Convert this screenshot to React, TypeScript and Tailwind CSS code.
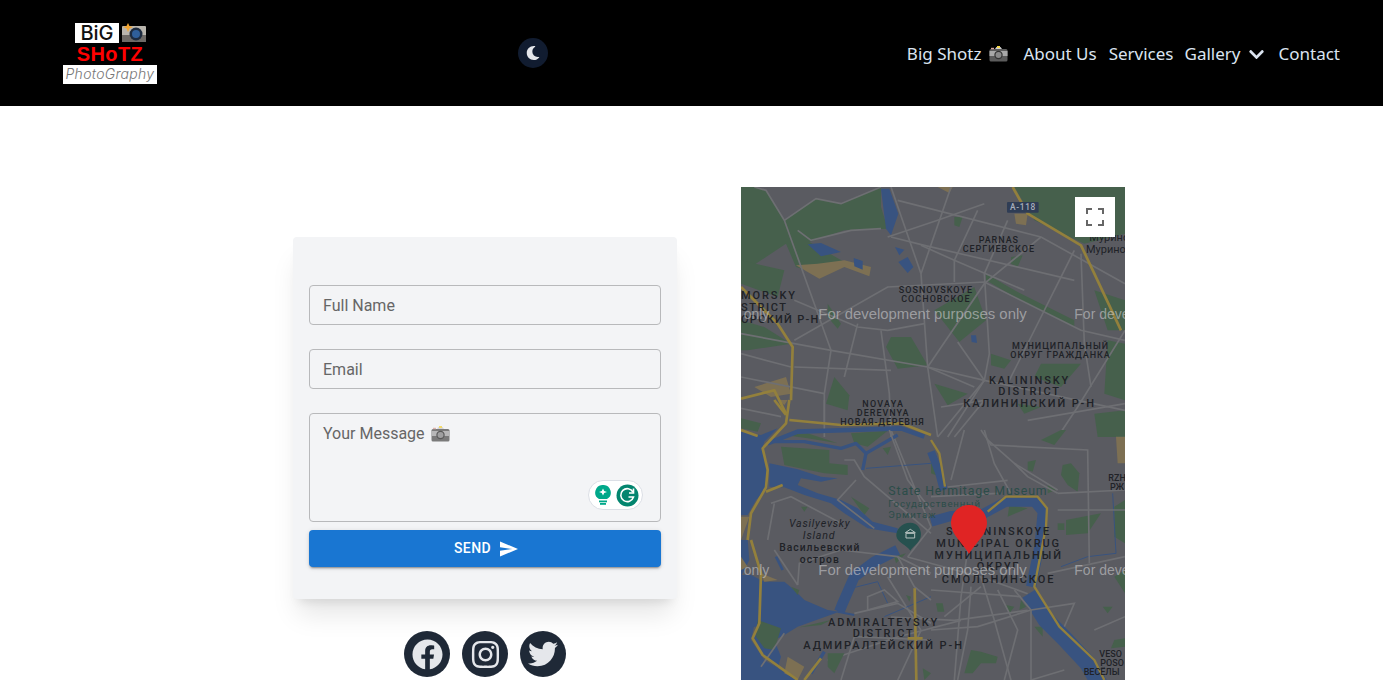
import { FaFacebook, FaInstagram, FaTwitter, FaMoon, FaChevronDown } from "react-icons/fa";

function Camera({ w = 19, className = "" }: { w?: number; className?: string }) {
  return (
    <svg width={w} height={Math.round((w * 16) / 19)} viewBox="0 0 19 16" className={"shrink-0 " + className}>
      <rect x="0.5" y="3" width="18" height="12.5" rx="1.5" fill="#5c5c5c" />
      <rect x="0.5" y="5" width="18" height="5" fill="#a9a9a9" />
      <path d="M6 3 L7.5 1 H11.5 L13 3Z" fill="#cfcfcf" />
      <rect x="8" y="0" width="3" height="2" fill="#f5d64b" />
      <rect x="2" y="1.8" width="3" height="1.4" fill="#d9a59d" />
      <circle cx="9.5" cy="9" r="4.2" fill="#333" />
      <circle cx="9.5" cy="9" r="3" fill="#8b8b8b" />
    </svg>
  );
}

function Logo() {
  return (
    <div className="flex w-[94px] flex-col items-center">
      <div className="ml-[1px] flex h-[20px] items-stretch gap-[3px]">
        <div className="flex w-[44px] items-center justify-center bg-white font-['Inter',sans-serif] text-[20px] font-medium leading-none text-[#111]">BiG</div>
        <svg width="24" height="20" viewBox="0 0 24 20">
          <rect x="0" y="3" width="24" height="16" rx="1" fill="#b9b5ad" />
          <rect x="0" y="12" width="24" height="7" fill="#6e6a66" />
          <circle cx="14" cy="11" r="6.5" fill="#1d2b3f" />
          <circle cx="14" cy="11" r="4" fill="#2f5f9a" />
          <path d="M6 0 L7.5 3 L11 4 L7.5 5.5 L6 9 L4.5 5.5 L1 4 L4.5 3Z" fill="#f2a531" />
        </svg>
      </div>
      <div className="mt-[3px] h-[17px] font-['Liberation_Sans',sans-serif] text-[20px] font-bold leading-[17px] tracking-[0.4px] text-[#ff0000]">SHoTZ</div>
      <div className="mt-[2px] flex h-[19px] w-[94px] items-center justify-center bg-white font-['Inter',sans-serif] text-[14px] font-light italic leading-none tracking-[0.3px] text-[#777]">PhotoGraphy</div>
    </div>
  );
}

function NavItem({ children, className = "" }: { children: React.ReactNode; className?: string }) {
  return <a className={"block cursor-pointer " + className}>{children}</a>;
}

function Header() {
  return (
    <header className="flex h-[106px] items-center bg-black pl-[63px] pr-[43px]">
      <Logo />
      <button className="ml-[361px] flex h-[30px] w-[30px] items-center justify-center rounded-full bg-[#111c30] text-[#e5e7eb]">
        <FaMoon size={14} />
      </button>
      <nav className="ml-auto mt-[2px] flex items-center font-['Noto_Sans',sans-serif] text-[17px] text-[#dbe4f0]">
        <NavItem className="flex items-center gap-[8px]">Big Shotz <Camera /></NavItem>
        <NavItem className="ml-[15px]">About Us</NavItem>
        <NavItem className="ml-[12px]">Services</NavItem>
        <NavItem className="ml-[11px] flex items-center gap-[8px]">Gallery <FaChevronDown size={17} /></NavItem>
        <NavItem className="ml-[13px]">Contact</NavItem>
      </nav>
    </header>
  );
}

type L = [string, number, number, number, number?];

const upperLabels: L[] = [
  ["PARNAS", 772, 167, 118, 27],
  ["СЕРГИЕВСКОЕ", 772, 195, 214, 27],
  ["SOSNOVSKOYE", 583, 318, 220, 27],
  ["СОСНОВСКОЕ", 583, 345, 205, 27],
  ["МУНИЦИПАЛЬНЫЙ", 957, 485, 288, 27],
  ["ОКРУГ ГРАЖДАНКА", 957, 512, 298, 27],
  ["KALININSKY", 863, 590, 238, 33],
  ["DISTRICT", 863, 625, 182, 33],
  ["КАЛИНИНСКИЙ Р-Н", 863, 661, 392, 33],
  ["NOVAYA", 425, 660, 122, 27],
  ["DEREVNYA", 425, 687, 155, 27],
  ["НОВАЯ-ДЕРЕВНЯ", 423, 714, 250, 27],
];
const lowerLabels: L[] = [
  ["Васильевский", 235, 362, 240, 31],
  ["остров", 235, 398, 117, 31],
  ["SMOLNINSKOYE", 770, 315, 310, 33],
  ["MUNICIPAL OKRUG", 770, 352, 368, 33],
  ["МУНИЦИПАЛЬНЫЙ", 770, 388, 380, 33],
  ["ОКРУГ", 770, 420, 125, 33],
  ["СМОЛЬНИНСКОЕ", 770, 460, 335, 33],
  ["ADMIRALTEYSKY", 425, 587, 328, 33],
  ["DISTRICT", 425, 622, 180, 33],
  ["АДМИРАЛТЕЙСКИЙ Р-Н", 425, 658, 476, 33],
];

function Labels({ items }: { items: L[] }) {
  return (
    <g fill="#202227" fontFamily="Roboto, sans-serif" fontWeight="500" textAnchor="middle">
      {items.map(([t, x, y, w, s], i) => (
        <text key={i} x={x} y={y} fontSize={s ?? 27} textLength={w} lengthAdjust="spacing">{t}</text>
      ))}
    </g>
  );
}

const upperRoads = [
  "M40 0 L75 10 L130 100 L270 490 L250 620 L250 750",
  "M130 100 L225 35 L300 50 L420 0",
  "M450 0 L540 260 L560 540 L590 750",
  "M630 0 L540 260",
  "M470 40 L900 150 L1152 290",
  "M0 440 L270 490 L560 540 L730 580 L1152 670",
  "M160 460 L440 300 L730 285 L1020 430 L1152 460",
  "M440 150 L590 100 L730 50",
  "M450 150 L550 175 L1000 280",
  "M730 260 L745 500 L730 580 L590 750",
  "M900 150 L730 290 L560 540",
  "M1020 200 L1030 470 L1050 600",
  "M1000 190 L800 590",
  "M420 430 L445 620 L450 750",
  "M350 410 L310 570",
  "M0 570 L250 620",
  "M730 580 L620 750",
  "M1152 430 L1010 660 L950 750",
  "M650 465 L730 580",
  "M160 340 L350 420 L440 430 L550 410",
  "M710 70 L640 220 L640 285",
  "M0 500 L150 540",
  "M800 100 L730 260",
  "M170 130 L210 160 L330 130 L420 125",
  "M540 175 L640 220 L850 310",
  "M160 540 L450 550",
  "M560 540 L700 600",
  "M860 700 L1152 650",
  "M600 660 L730 640 L640 750",
];
const midRoads = [
  "M450 729 L520 900 L570 1020",
  "M730 729 L760 830 L810 920",
  "M680 1090 L660 1230 L640 1480",
  "M720 1170 L760 1300 L810 1480",
  "M450 1290 L640 1300 L860 1270",
  "M500 1110 L720 1170 L860 1220",
  "M570 1020 L500 1110",
  "M620 900 L800 880",
  "M440 1170 L540 1330 L470 1480",
  "M260 1420 L470 1350 L660 1300",
];
const cropARoads = [
  "M310 180 H340 L370 230 L570 400",
  "M445 90 L500 240 L570 330",
  "M345 240 L290 300 L400 385",
  "M90 310 L150 290 L300 370",
  "M100 310 L80 420",
  "M0 25 L120 50",
  "M250 0 V70",
];
const cropBRoads = [
  "M170 135 L175 70 L300 30 L470 50 L570 100",
  "M380 170 L430 150 L470 185 L380 210 Z",
  "M340 220 L470 190 L570 250",
  "M470 50 L520 140 L570 180",
  "M60 380 L130 280",
  "M300 420 L340 290 L570 300",
  "M100 30 L170 135",
];
const cropCRoads = [
  "M150 0 L180 45 L470 60 L475 400",
  "M380 190 L582 180",
  "M380 240 L582 240",
  "M250 100 L380 180",
  "M170 30 L250 100 L290 140 L380 190",
  "M0 600 L140 590 L300 540 L430 520 L400 590",
  "M350 430 L582 380",
  "M120 470 L110 600 L80 750",
  "M250 480 L300 540 L300 750",
  "M490 600 L582 560",
  "M0 480 L270 500",
  "M300 750 L400 720",
  "M0 200 L200 190",
  "M100 0 L60 150",
  "M150 470 L40 560",
  "M200 480 L260 600 L220 750",
];

function MapPanel() {
  return (
    <div className="relative h-[500px] w-[384px] shrink-0 overflow-hidden bg-[#5a5b61]">
      <svg viewBox="0 0 384 500" width="384" height="500" className="block">
        <g transform="scale(0.33333)">
          <g fill="#46604c">
            <path d="M0 0 L45 0 L75 10 L130 100 L225 35 L300 50 L420 0 L420 60 L440 125 L310 130 L205 165 L310 225 L230 260 L165 240 L135 170 L0 260Z" />
            <path d="M820 0 L1152 0 L1152 140 L1030 170 L880 100Z" />
            <path d="M0 290 L0 220 L130 250 L110 330Z" />
            <path d="M580 370 L700 300 L735 400 L655 465Z" />
            <path d="M450 450 L510 450 L560 535 L470 545 L435 480Z" />
            <path d="M735 260 L830 315 L1000 400 L1000 420 L830 335 L735 280Z" />
            <path d="M0 400 L70 420 L150 470 L20 490 L0 490Z" />
            <path d="M580 590 L680 620 L620 655Z" />
            <path d="M280 570 L325 625 L320 670 L255 650Z" />
            <path d="M900 530 L1020 530 L960 600 L880 570Z" />
            <path d="M1060 310 L1152 340 L1152 430 L1100 430Z" />
            <path d="M1100 460 L1152 470 L1152 640 L1090 620Z" />
            <path d="M1060 680 L1152 670 L1152 750 L1070 750Z" />
            <path d="M750 500 L810 520 L790 545 L750 535Z" />
            <path d="M640 90 L665 90 L655 120 L640 115Z" />
            <path d="M810 210 L845 205 L830 240 L810 230Z" />
            <path d="M260 350 L300 410 L290 425 L260 390Z" />
            <path d="M830 650 L900 660 L850 680Z" />
          </g>
          <g fill="#7d7053">
            <path d="M165 235 L230 230 L310 220 L390 240 L385 268 L310 240 L235 275Z" />
            <path d="M590 0 L635 0 L625 18Z" />
            <path d="M820 80 L860 80 L855 115 L825 110Z" />
            <path d="M40 600 L135 570 L150 620 L90 630Z" />
          </g>
          <g fill="#385380">
            <path d="M420 5 L445 5 L472 80 L450 145 L435 125Z" />
            <path d="M200 172 L240 168 L300 195 L240 208Z" />
            <path d="M338 213 L365 222 L365 248 L340 238Z" />
            <path d="M462 180 L490 188 L475 205Z" />
            <path d="M472 225 L500 210 L517 240 L500 258Z" />
            <path d="M690 445 L705 445 L708 468 L692 465Z" />
          </g>
          <g fill="none" stroke="#6e6f73" strokeWidth="5">
            {upperRoads.map((d) => <path key={d} d={d} />)}
            {midRoads.map((d) => <path key={d} d={d} />)}
          </g>

          <g transform="translate(0 639)">
            <g fill="#46604c">
              <path d="M120 140 L265 150 L265 190 L320 195 L320 225 L250 220 L130 195Z" />
              <path d="M330 100 L440 92 L380 140 L340 130Z" />
              <path d="M130 105 L200 100 L290 130 L200 115Z" />
              <path d="M0 55 L60 70 L50 95 L0 85Z" />
              <path d="M425 145 L450 140 L440 165Z" />
              <path d="M180 320 L200 320 L190 335Z" />
              <path d="M330 290 L385 325 L370 345Z" />
            </g>
            <path d="M110 0 L140 0 L130 15Z" fill="#7d7053" />
            <path d="M0 350 L25 350 L0 420Z" fill="#7d7053" />
            <g fill="#385380">
              <path d="M0 95 L60 105 L110 85 L70 125 L62 150 L80 210 L80 262 L45 300 L20 345 L0 345Z" />
              <path d="M85 190 L170 208 L240 230 L290 235 L240 245 L180 235 L170 255 L230 280 L300 300 L350 325 L395 365 L470 385 L470 400 L380 385 L310 340 L270 310 L190 285 L130 262 L85 260Z" />
            </g>
            <g fill="none" stroke="#385380" strokeLinejoin="round">
              <path strokeWidth="14" d="M80 130 L170 95 L330 90 L480 85 L550 110" />
              <path strokeWidth="10" d="M100 125 L190 125 L300 145 L345 130 L375 160 L365 210" />
              <path strokeWidth="10" d="M375 160 L470 105" />
              <path strokeWidth="3" d="M375 205 L570 190" />
            </g>
            <g fill="none" stroke="#6e6f73" strokeWidth="5">
              {cropARoads.map((d) => <path key={d} d={d} />)}
            </g>
            <g fill="none" stroke="#93803c" strokeWidth="8" strokeLinejoin="round">
              <path d="M145 0 L135 70 L65 145 L80 210 L75 262 L30 340 L20 420" />
              <path d="M0 90 L50 108" />
              <path d="M75 275 L125 255" />
              <path d="M145 60 L300 75 L480 70 L570 105" />
              <path d="M100 0 L135 45" />
            </g>
          </g>

          <g transform="translate(0 1059)">
            <g fill="#385380">
              <path d="M0 0 L20 0 L25 60 L0 110Z" />
              <path d="M0 105 L30 105 L70 125 L130 125 L160 150 L190 180 L260 210 L295 215 L170 260 L130 285 L100 300 L120 350 L110 385 L60 345 L35 300 L45 260 L0 260Z" />
              <path d="M0 255 L40 255 L30 300 L70 360 L170 420 L0 420Z" />
            </g>
            <g fill="none" stroke="#385380" strokeLinejoin="round">
              <path strokeWidth="32" d="M470 30 L400 65 L340 110 L305 190 L295 215" />
              <path strokeWidth="6" d="M290 215 L340 225" />
              <path strokeWidth="10" d="M210 400 L250 335" />
              <path strokeWidth="3" d="M330 145 L410 125 L440 190" />
              <path strokeWidth="3" d="M430 230 L570 170" />
              <path strokeWidth="8" d="M105 50 L125 90" />
            </g>
            <g fill="#46604c">
              <path d="M50 240 L120 265 L100 330 L70 325 L45 290Z" />
              <path d="M175 262 L270 240 L240 255Z" />
              <path d="M260 340 L310 340 L280 400 L260 380Z" />
              <path d="M460 50 L495 40 L465 70Z" />
              <path d="M150 140 L175 150 L170 165Z" />
              <path d="M495 165 L510 170 L505 185Z" />
              <path d="M545 385 L570 400 L550 420Z" />
            </g>
            <g fill="#7d7053">
              <path d="M140 350 L190 380 L170 420 L130 400Z" />
              <path d="M0 50 L20 80 L0 90Z" />
              <path d="M60 100 L110 120 L70 125Z" />
            </g>
            <g fill="none" stroke="#6e6f73" strokeWidth="5">
              {cropBRoads.map((d) => <path key={d} d={d} />)}
            </g>
            <g fill="none" stroke="#93803c" strokeWidth="8" strokeLinejoin="round">
              <path d="M30 0 L60 100 L55 250 L35 295 L65 345 L170 420" />
              <path d="M190 420 L240 355" />
              <path d="M521 145 L526 420" />
              <path d="M500 295 H545" />
            </g>
          </g>

          <g transform="translate(570 729)">
            <g fill="#46604c">
              <path d="M395 105 L420 100 L445 130 L440 185 L410 165 L390 135Z" />
              <path d="M290 95 L315 90 L305 125 L290 120Z" />
              <path d="M350 165 L375 180 L350 190Z" />
              <path d="M330 30 L390 0 L405 0 L370 45Z" />
              <path d="M235 225 L290 235 L230 260Z" />
              <path d="M380 280 L400 280 L400 300 L380 300Z" />
              <path d="M405 270 L510 250 L470 310 L405 315Z" />
              <path d="M550 230 L582 210 L582 340 L550 320Z" />
              <path d="M550 440 L582 420 L582 490Z" />
              <path d="M515 530 L545 530 L530 550Z" />
              <path d="M225 525 L250 530 L235 550Z" />
              <path d="M15 520 L35 520 L40 545 L20 545Z" />
              <path d="M120 660 L150 665 L200 680 L195 700 L150 700 L125 730 L100 730Z" />
              <path d="M310 590 L335 590 L335 620Z" />
              <path d="M550 630 L582 625 L582 650 L540 655Z" />
              <path d="M270 510 L285 530 L265 540Z" />
              <path d="M0 90 L30 100 L25 140 L0 130Z" />
            </g>
            <path d="M555 20 L582 20 L582 100 L560 100Z" fill="#7d7053" />
            <g fill="none" stroke="#385380" strokeLinejoin="round">
              <path strokeWidth="24" d="M0 65 L25 130 L38 180" />
              <path strokeWidth="30" d="M0 275 L60 258 L150 255 L225 215 L310 215 L335 245 L325 350 L300 470" />
              <path strokeWidth="50" d="M295 490 L345 570 L400 625 L470 700 L510 770" />
              <path strokeWidth="3" d="M390 410 L470 380 L555 370 L545 190" />
            </g>
            <g fill="none" stroke="#6e6f73" strokeWidth="5">
              {cropCRoads.map((d) => <path key={d} d={d} />)}
            </g>
            <g fill="none" stroke="#93803c" strokeWidth="7" strokeLinejoin="round">
              <path d="M0 30 L25 70 L42 170" />
              <path d="M170 245 L225 200 L320 200 L348 235 L345 290 L310 470 L385 590 L490 690 L520 750" />
            </g>
          </g>

          <g fill="none" stroke="#93803c" strokeWidth="8" strokeLinejoin="round">
            <path d="M815 0 L860 80 L1020 175 L1060 260 L1140 430" />
            <path d="M0 300 L110 410 L155 480 L150 640" />
            <path d="M0 635 L100 610 L135 680" />
          </g>
          <Labels items={upperLabels} />
          <g fill="#202227" fontFamily="Roboto, sans-serif" fontWeight="500" fontSize="33">
            <text x="162" y="336" textAnchor="end" textLength="162" lengthAdjust="spacing">MORSKY</text>
            <text x="135" y="372" textAnchor="end" textLength="135" lengthAdjust="spacing">STRICT</text>
            <text x="232" y="408" textAnchor="end" textLength="232" lengthAdjust="spacing">ОРСКИЙ Р-Н</text>
            <text x="1035" y="197" fontWeight="400" fontSize="33">Мурино</text>
            <text x="1045" y="161" fontWeight="400" fontSize="33">Мурино</text>
          </g>
          <rect x="798" y="45" width="95" height="32" rx="3" fill="#2f3d55" />
          <text x="845" y="69" textAnchor="middle" fontFamily="Roboto, sans-serif" fontSize="25" fontWeight="500" fill="#a9b0bd" textLength="76">A-118</text>
          <g fill="#c8c8ca" fillOpacity="0.62" fontFamily="'Liberation Sans', sans-serif" fontSize="42">
            <text x="232" y="396" textLength="625" lengthAdjust="spacingAndGlyphs">For development purposes only</text>
            <text x="1000" y="396">For development</text>
            <text x="8" y="396">only</text>
          </g>
        </g>
        <g transform="translate(0 243) scale(0.33333)">
          <Labels items={lowerLabels} />
          <g fontFamily="Roboto, sans-serif">
            <text x="235" y="290" textAnchor="middle" fontSize="32" fontStyle="italic" fill="#202227" textLength="182">Vasilyevsky</text>
            <text x="233" y="326" textAnchor="middle" fontSize="32" fontStyle="italic" fill="#202227" textLength="95">Island</text>
            <g fill="#2c4d49">
              <text x="442" y="196" fontSize="37" textLength="475">State Hermitage Museum</text>
              <text x="442" y="230" fontSize="29" textLength="275">Государственный</text>
              <text x="442" y="265" fontSize="29" textLength="142">Эрмитаж</text>
            </g>
            <g fill="#202227" fontWeight="500" fontSize="27">
              <text x="1102" y="152">RZH</text>
              <text x="1107" y="180">РЖ</text>
              <text x="1075" y="680">VESO</text>
              <text x="1078" y="708">POSO</text>
              <text x="1028" y="735">ВЕСЁЛЫ</text>
            </g>
          </g>
          <path d="M508 278 C480 278 465 300 466 318 C468 338 498 345 508 362 C518 345 540 338 540 312 C540 295 528 278 508 278Z" fill="#26514f" />
          <path d="M493 308 L508 298 L523 308Z M495 310 H521 V324 H495Z" fill="none" stroke="#b8c4c2" strokeWidth="3" />
          <g fill="#c8c8ca" fillOpacity="0.62" fontFamily="'Liberation Sans', sans-serif" fontSize="42">
            <text x="232" y="435" textLength="625" lengthAdjust="spacingAndGlyphs">For development purposes only</text>
            <text x="1000" y="435">For development</text>
            <text x="8" y="435">only</text>
          </g>
          <path d="M684 225 C652 225 630 250 630 280 C630 315 670 345 684 372 C698 345 738 315 738 280 C738 250 716 225 684 225Z" fill="#e02424" />
        </g>
      </svg>
      <button className="absolute right-[10px] top-[10px] flex h-[40px] w-[40px] items-center justify-center bg-white">
        <svg width="18" height="18" viewBox="0 0 18 18" fill="none" stroke="#666" strokeWidth="2">
          <path d="M1 6 V1 H6 M12 1 H17 V6 M17 12 V17 H12 M6 17 H1 V12" />
        </svg>
      </button>
    </div>
  );
}

function Field({ placeholder }: { placeholder: string }) {
  return (
    <input
      placeholder={placeholder}
      className="block h-[40px] w-full rounded-[4px] border border-[#b8b9bb] bg-transparent px-[13px] font-['Roboto',sans-serif] text-[16px] outline-none placeholder:text-[#666]"
    />
  );
}

function ContactCard() {
  return (
    <div className="w-[384px] rounded-[4px] bg-[#f3f4f6] px-[16px] pb-[32px] pt-[48px] shadow-[0_20px_25px_-5px_rgba(0,0,0,0.1),0_8px_10px_-6px_rgba(0,0,0,0.1)]">
      <Field placeholder="Full Name" />
      <div className="mt-[24px]"><Field placeholder="Email" /></div>
      <div className="relative mt-[24px] flex h-[109px] items-start gap-[6px] rounded-[4px] border border-[#b8b9bb] px-[13px] py-[9px] font-['Roboto',sans-serif] text-[16px] leading-[22px] text-[#666]">
        <span>Your Message</span>
        <span className="mt-[3px]"><Camera className="opacity-80" /></span>
        <div className="absolute right-[17px] top-[66px] flex h-[30px] w-[55px] items-center justify-between rounded-full border border-[#dcdfe6] bg-white pl-[6px] pr-[3px]">
          <svg width="16" height="20" viewBox="0 0 16 20">
            <path d="M8 0 A7.5 7.5 0 0 1 12 14 H4 A7.5 7.5 0 0 1 8 0Z" fill="#00a88a" />
            <path d="M8 3.5 L9.2 6 L12 7 L9.2 8 L8 10.5 L6.8 8 L4 7 L6.8 6Z" fill="#fff" />
            <rect x="4" y="15.5" width="8" height="1.8" fill="#00a88a" />
            <rect x="5" y="18" width="6" height="1.8" fill="#00a88a" />
          </svg>
          <svg width="23" height="23" viewBox="0 0 23 23">
            <circle cx="11.5" cy="11.5" r="11" fill="#03856f" />
            <path d="M17 8 A6.5 6.5 0 1 0 17.5 13 H12.5" fill="none" stroke="#fff" strokeWidth="1.6" />
            <path d="M17.5 4.5 V9 H13" fill="none" stroke="#fff" strokeWidth="1.6" />
          </svg>
        </div>
      </div>
      <button className="mt-[8px] flex h-[37px] w-full items-center justify-center gap-[9px] rounded-[4px] bg-[#1976d2] pb-[1px] pl-[2px] font-['Roboto',sans-serif] text-[14px] font-medium tracking-[0.4px] text-white shadow-[0_3px_1px_-2px_rgba(0,0,0,0.2),0_2px_2px_0_rgba(0,0,0,0.14),0_1px_5px_0_rgba(0,0,0,0.12)]">
        SEND
        <svg width="18" height="16" viewBox="0 0 18 16" fill="#fff" className="mt-[1px]">
          <path d="M0 15.5 L18 8 L0 0.5 V6.3 L12.5 8 L0 9.7Z" />
        </svg>
      </button>
    </div>
  );
}

function Social({ children }: { children: React.ReactNode }) {
  return (
    <a className="flex h-[46px] w-[46px] items-center justify-center rounded-full bg-[#1f2937] text-[#e5e7eb]">{children}</a>
  );
}

export default function App() {
  return (
    <div className="h-[680px] overflow-hidden bg-white">
      <Header />
      <main className="flex justify-center gap-[64px] pl-[35px] pt-[81px]">
        <div className="flex flex-col items-center pt-[50px]">
          <ContactCard />
          <div className="mt-[32px] flex gap-[12px]">
            <Social><FaFacebook size={31} /></Social>
            <Social><FaInstagram size={31} /></Social>
            <Social><FaTwitter size={30} /></Social>
          </div>
        </div>
        <MapPanel />
      </main>
    </div>
  );
}
